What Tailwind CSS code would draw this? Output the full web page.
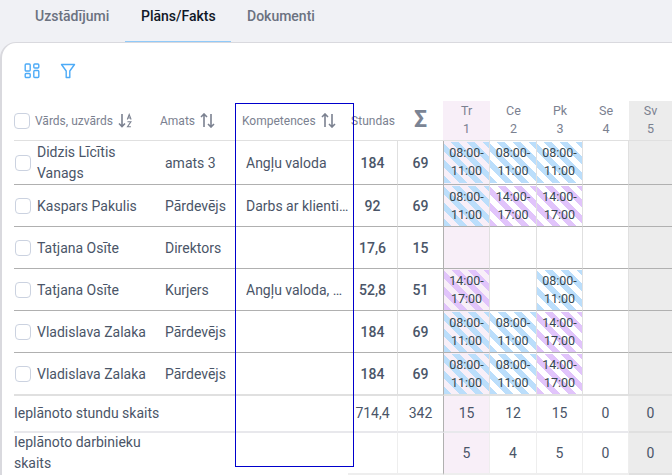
<!DOCTYPE html>
<html lang="lv">
<head>
    <meta charset="UTF-8">
    <title>Plāns/Fakts</title>
    <script src="https://cdn.jsdelivr.net/npm/@tailwindcss/browser@4"></script>
</head>
<body class="relative h-[475px] w-[672px] overflow-hidden bg-[#f0f1f5] font-['Roboto',sans-serif] text-[14px] text-[#4a5568]">
    <!-- Tabs -->
    <div class="flex h-[42px] pl-[10px] text-[14px] font-medium leading-[32px] text-[#6b7280]">
        <div class="w-[115px] pl-[25px]">Uzstādījumi</div>
        <div class="h-[42px] w-[106px] border-b border-[#90caf9] pl-[16px] text-[#111827]">Plāns/Fakts</div>
        <div class="pl-[16px]">Dokumenti</div>
    </div>

    <!-- Card -->
    <div class="h-[433px] rounded-tl-[16px] border-t border-l-2 border-[#d9d9de] bg-white pl-[12px]">
        <div class="flex h-[58px] items-start gap-[20px] pt-[20px] pl-[10px]">
            <svg width="16" height="16" viewBox="0 0 16 16" fill="none" stroke="#4dabf7" stroke-width="1.4">
                <rect x="1.2" y="1" width="5" height="7" rx="1"/><rect x="9.8" y="1" width="5" height="4" rx="1"/>
                <rect x="1.2" y="10.5" width="5" height="4" rx="1"/><rect x="9.8" y="7.5" width="5" height="7" rx="1"/>
            </svg>
            <svg width="16" height="16" viewBox="0 0 16 16" fill="none" stroke="#4dabf7" stroke-width="1.4" stroke-linejoin="round">
                <path d="M1.5 1.5h13L9.8 8v6.5H6.2V8z"/>
            </svg>
        </div>

        <div class="grid grid-cols-[146px_76px_112px_50px_46px_46px_47px_46px_46px_43px] grid-rows-[40px_44px_42px_42px_42px_42px_43px_37px_42px]">
            <!-- Header -->
            <div class="flex items-center border-b border-[#e0e0e0] text-[12px] text-[#7b8190]">
                <span class="mr-[5px] h-[16px] w-[16px] rounded-[4px] border border-[#cbd2e0] bg-white"></span>Vārds, uzvārds
                <svg class="ml-[5px]" width="15" height="15" viewBox="0 0 15 15" fill="none" stroke="#7b8190" stroke-width="1.6"><path d="M4 1v12.5M1 10.5l3 3 3-3"/><path d="M9.3 6.5l1.9-5 1.9 5M10 5h2.4M9.5 8.8h3.4l-3.4 5h3.4" stroke-width="1.1"/></svg>
            </div>
            <div class="flex items-center border-b border-[#e0e0e0] text-[12px] text-[#7b8190]">Amats
                <svg class="ml-[5px]" width="15" height="15" viewBox="0 0 15 15" fill="none" stroke="#7b8190" stroke-width="1.6"><path d="M4 14V1M1 4l3-3 3 3M11 1v13M8 11l3 3 3-3"/></svg>
            </div>
            <div class="flex items-center border-b border-[#e0e0e0] pl-[6px] text-[12px] text-[#7b8190]">Kompetences
                <svg class="ml-[5px]" width="15" height="15" viewBox="0 0 15 15" fill="none" stroke="#7b8190" stroke-width="1.6"><path d="M4 14V1M1 4l3-3 3 3M11 1v13M8 11l3 3 3-3"/></svg>
            </div>
            <div class="flex items-center justify-center border-b border-[#e0e0e0] text-[12px] text-[#7b8190]">Stundas</div>
            <div class="flex items-center justify-center border-b border-[#e0e0e0] pr-[1px] text-[23px] font-bold text-[#7b8494]">Σ</div>
            <div class="-ml-[1px] border-b border-[#e0e0e0] bg-[#f8eff8] pt-[1px] text-center text-[12.5px] leading-[18px] text-[#7b8190]">Tr<br>1</div>
            <div class="border-b border-[#e0e0e0] pt-[1px] text-center text-[12.5px] leading-[18px] text-[#7b8190]">Ce<br>2</div>
            <div class="border-b border-[#e0e0e0] pt-[1px] text-center text-[12.5px] leading-[18px] text-[#7b8190]">Pk<br>3</div>
            <div class="border-b border-[#e0e0e0] pt-[1px] text-center text-[12.5px] leading-[18px] text-[#7b8190]">Se<br>4</div>
            <div class="border-b border-[#e0e0e0] bg-[#ececec] pt-[1px] text-center text-[12.5px] leading-[18px] text-[#7b8190]">Sv<br>5</div>

            <!-- Didzis -->
            <div class="flex items-center border-b border-[#b0b0b0] pt-[1px] leading-[21px]"><span class="mr-[6px] ml-[1px] h-[16px] w-[16px] shrink-0 rounded-[4px] border border-[#cbd2e0]"></span><span class="w-[100px]">Didzis Līcītis Vanags</span></div>
            <div class="flex items-center border-b border-[#b0b0b0] pt-[1px] pl-[5px]">amats 3</div>
            <div class="flex items-center border-b border-[#b0b0b0] pt-[1px] pl-[10px]">Angļu valoda</div>
            <div class="flex items-center justify-center border-r border-b border-[#e0e0e0] border-b-[#b0b0b0] pt-[1px] font-medium">184</div>
            <div class="flex items-center justify-center border-r border-b border-[#b0b0b0] pt-[1px] font-medium">69</div>
            <div class="border-r border-b border-[#e0e0e0] border-b-[#b0b0b0] bg-[#f8eff8] text-center text-[12.5px] leading-[18px] text-[#37474f]"><div class="mt-[1px] h-[41px] bg-[repeating-linear-gradient(45deg,#bbdefb_0,#bbdefb_5.65px,transparent_5.65px,transparent_11.3px)] pt-[2px]">08:00-<br>11:00</div></div>
            <div class="border-r border-b border-[#e0e0e0] border-b-[#b0b0b0] text-center text-[12.5px] leading-[18px] text-[#37474f]"><div class="mt-[1px] h-[41px] bg-[repeating-linear-gradient(45deg,#bbdefb_0,#bbdefb_5.65px,transparent_5.65px,transparent_11.3px)] pt-[2px]">08:00-<br>11:00</div></div>
            <div class="border-r border-b border-[#e0e0e0] border-b-[#b0b0b0] text-center text-[12.5px] leading-[18px] text-[#37474f]"><div class="mt-[1px] h-[41px] bg-[repeating-linear-gradient(45deg,#bbdefb_0,#bbdefb_5.65px,transparent_5.65px,transparent_11.3px)] pt-[2px]">08:00-<br>11:00</div></div>
            <div class="border-r border-b border-[#e0e0e0] border-b-[#b0b0b0]"></div>
            <div class="border-b border-[#b0b0b0] bg-[#ececec]"></div>

            <!-- Kaspars -->
            <div class="flex items-center border-b border-[#b0b0b0] pt-[1px]"><span class="mr-[6px] ml-[1px] h-[16px] w-[16px] shrink-0 rounded-[4px] border border-[#cbd2e0]"></span>Kaspars Pakulis</div>
            <div class="flex items-center border-b border-[#b0b0b0] pt-[1px] pl-[5px]">Pārdevējs</div>
            <div class="flex items-center border-b border-[#b0b0b0] pt-[1px] pl-[10px]"><span class="w-[105px] shrink-0 truncate">Darbs ar klientiem</span></div>
            <div class="flex items-center justify-center border-r border-b border-[#e0e0e0] border-b-[#b0b0b0] pt-[1px] font-medium">92</div>
            <div class="flex items-center justify-center border-r border-b border-[#b0b0b0] pt-[1px] font-medium">69</div>
            <div class="border-r border-b border-[#e0e0e0] border-b-[#b0b0b0] bg-[#f8eff8] text-center text-[12.5px] leading-[18px] text-[#37474f]"><div class="mt-[1px] h-[40px] bg-[repeating-linear-gradient(45deg,#bbdefb_0,#bbdefb_5.65px,transparent_5.65px,transparent_11.3px)] pt-[2px]">08:00-<br>11:00</div></div>
            <div class="border-r border-b border-[#e0e0e0] border-b-[#b0b0b0] text-center text-[12.5px] leading-[18px] text-[#37474f]"><div class="mt-[1px] h-[40px] bg-[repeating-linear-gradient(45deg,#e1c4fb_0,#e1c4fb_5.65px,transparent_5.65px,transparent_11.3px)] pt-[2px]">14:00-<br>17:00</div></div>
            <div class="border-r border-b border-[#e0e0e0] border-b-[#b0b0b0] text-center text-[12.5px] leading-[18px] text-[#37474f]"><div class="mt-[1px] h-[40px] bg-[repeating-linear-gradient(45deg,#e1c4fb_0,#e1c4fb_5.65px,transparent_5.65px,transparent_11.3px)] pt-[2px]">14:00-<br>17:00</div></div>
            <div class="border-r border-b border-[#e0e0e0] border-b-[#b0b0b0]"></div>
            <div class="border-b border-[#b0b0b0] bg-[#ececec]"></div>

            <!-- Tatjana, Direktors -->
            <div class="flex items-center border-b border-[#b0b0b0] pt-[1px]"><span class="mr-[6px] ml-[1px] h-[16px] w-[16px] shrink-0 rounded-[4px] border border-[#cbd2e0]"></span>Tatjana Osīte</div>
            <div class="flex items-center border-b border-[#b0b0b0] pt-[1px] pl-[5px]">Direktors</div>
            <div class="border-b border-[#b0b0b0]"></div>
            <div class="flex items-center justify-center border-r border-b border-[#e0e0e0] border-b-[#b0b0b0] pt-[1px] font-medium">17,6</div>
            <div class="flex items-center justify-center border-r border-b border-[#b0b0b0] pt-[1px] font-medium">15</div>
            <div class="border-r border-b border-[#e0e0e0] border-b-[#b0b0b0] bg-[#f8eff8]"></div>
            <div class="border-r border-b border-[#e0e0e0] border-b-[#b0b0b0]"></div>
            <div class="border-r border-b border-[#e0e0e0] border-b-[#b0b0b0]"></div>
            <div class="border-r border-b border-[#e0e0e0] border-b-[#b0b0b0]"></div>
            <div class="border-b border-[#b0b0b0] bg-[#ececec]"></div>

            <!-- Tatjana, Kurjers -->
            <div class="flex items-center border-b border-[#b0b0b0] pt-[1px]"><span class="mr-[6px] ml-[1px] h-[16px] w-[16px] shrink-0 rounded-[4px] border border-[#cbd2e0]"></span>Tatjana Osīte</div>
            <div class="flex items-center border-b border-[#b0b0b0] pt-[1px] pl-[5px]">Kurjers</div>
            <div class="flex items-center border-b border-[#b0b0b0] pt-[1px] pl-[10px]"><span class="w-[105px] shrink-0 truncate">Angļu valoda, Darbs</span></div>
            <div class="flex items-center justify-center border-r border-b border-[#e0e0e0] border-b-[#b0b0b0] pt-[1px] font-medium">52,8</div>
            <div class="flex items-center justify-center border-r border-b border-[#b0b0b0] pt-[1px] font-medium">51</div>
            <div class="border-r border-b border-[#e0e0e0] border-b-[#b0b0b0] bg-[#f8eff8] text-center text-[12.5px] leading-[18px] text-[#37474f]"><div class="mt-[1px] h-[40px] bg-[repeating-linear-gradient(45deg,#e1c4fb_0,#e1c4fb_5.65px,transparent_5.65px,transparent_11.3px)] pt-[2px]">14:00-<br>17:00</div></div>
            <div class="border-r border-b border-[#e0e0e0] border-b-[#b0b0b0]"></div>
            <div class="border-r border-b border-[#e0e0e0] border-b-[#b0b0b0] text-center text-[12.5px] leading-[18px] text-[#37474f]"><div class="mt-[1px] h-[40px] bg-[repeating-linear-gradient(45deg,#bbdefb_0,#bbdefb_5.65px,transparent_5.65px,transparent_11.3px)] pt-[2px]">08:00-<br>11:00</div></div>
            <div class="border-r border-b border-[#e0e0e0] border-b-[#b0b0b0]"></div>
            <div class="border-b border-[#b0b0b0] bg-[#ececec]"></div>

            <!-- Vladislava 1 -->
            <div class="flex items-center border-b border-[#b0b0b0] pt-[1px]"><span class="mr-[6px] ml-[1px] h-[16px] w-[16px] shrink-0 rounded-[4px] border border-[#cbd2e0]"></span>Vladislava Zalaka</div>
            <div class="flex items-center border-b border-[#b0b0b0] pt-[1px] pl-[5px]">Pārdevējs</div>
            <div class="border-b border-[#b0b0b0]"></div>
            <div class="flex items-center justify-center border-r border-b border-[#e0e0e0] border-b-[#b0b0b0] pt-[1px] font-medium">184</div>
            <div class="flex items-center justify-center border-r border-b border-[#b0b0b0] pt-[1px] font-medium">69</div>
            <div class="border-r border-b border-[#e0e0e0] border-b-[#b0b0b0] bg-[#f8eff8] text-center text-[12.5px] leading-[18px] text-[#37474f]"><div class="mt-[1px] h-[40px] bg-[repeating-linear-gradient(45deg,#bbdefb_0,#bbdefb_5.65px,transparent_5.65px,transparent_11.3px)] pt-[2px]">08:00-<br>11:00</div></div>
            <div class="border-r border-b border-[#e0e0e0] border-b-[#b0b0b0] text-center text-[12.5px] leading-[18px] text-[#37474f]"><div class="mt-[1px] h-[40px] bg-[repeating-linear-gradient(45deg,#bbdefb_0,#bbdefb_5.65px,transparent_5.65px,transparent_11.3px)] pt-[2px]">08:00-<br>11:00</div></div>
            <div class="border-r border-b border-[#e0e0e0] border-b-[#b0b0b0] text-center text-[12.5px] leading-[18px] text-[#37474f]"><div class="mt-[1px] h-[40px] bg-[repeating-linear-gradient(45deg,#e1c4fb_0,#e1c4fb_5.65px,transparent_5.65px,transparent_11.3px)] pt-[2px]">14:00-<br>17:00</div></div>
            <div class="border-r border-b border-[#e0e0e0] border-b-[#b0b0b0]"></div>
            <div class="border-b border-[#b0b0b0] bg-[#ececec]"></div>

            <!-- Vladislava 2 -->
            <div class="flex items-center border-b-2 border-[#e0e0e0] pt-[1px]"><span class="mr-[6px] ml-[1px] h-[16px] w-[16px] shrink-0 rounded-[4px] border border-[#cbd2e0]"></span>Vladislava Zalaka</div>
            <div class="flex items-center border-b-2 border-[#e0e0e0] pt-[1px] pl-[5px]">Pārdevējs</div>
            <div class="border-b-2 border-[#e0e0e0]"></div>
            <div class="flex items-center justify-center border-r border-b-2 border-[#e0e0e0] pt-[1px] font-medium">184</div>
            <div class="flex items-center justify-center border-r border-b-2 border-[#e0e0e0] border-r-[#b0b0b0] pt-[1px] font-medium">69</div>
            <div class="border-r border-b-2 border-[#e0e0e0] bg-[#f8eff8] text-center text-[12.5px] leading-[18px] text-[#37474f]"><div class="mt-[1px] h-[40px] bg-[repeating-linear-gradient(45deg,#bbdefb_0,#bbdefb_5.65px,transparent_5.65px,transparent_11.3px)] pt-[2px]">08:00-<br>11:00</div></div>
            <div class="border-r border-b-2 border-[#e0e0e0] text-center text-[12.5px] leading-[18px] text-[#37474f]"><div class="mt-[1px] h-[40px] bg-[repeating-linear-gradient(45deg,#bbdefb_0,#bbdefb_5.65px,transparent_5.65px,transparent_11.3px)] pt-[2px]">08:00-<br>11:00</div></div>
            <div class="border-r border-b-2 border-[#e0e0e0] text-center text-[12.5px] leading-[18px] text-[#37474f]"><div class="mt-[1px] h-[40px] bg-[repeating-linear-gradient(45deg,#e1c4fb_0,#e1c4fb_5.65px,transparent_5.65px,transparent_11.3px)] pt-[2px]">14:00-<br>17:00</div></div>
            <div class="border-r border-b-2 border-[#e0e0e0]"></div>
            <div class="border-b-2 border-[#e0e0e0] bg-[#ececec]"></div>

            <!-- Totals -->
            <div class="col-span-3 flex items-center border-b-2 border-[#e8e8ec]">Ieplānoto stundu skaits</div>
            <div class="flex items-center justify-center border-r border-b-2 border-[#eeeeee] border-b-[#e8e8ec]">714,4</div>
            <div class="flex items-center justify-center border-r border-b-2 border-[#e8e8ec] border-r-[#b0b0b0]">342</div>
            <div class="flex items-center justify-center border-r border-b-2 border-[#eeeeee] border-b-[#e8e8ec] bg-[#f8eff8]">15</div>
            <div class="flex items-center justify-center border-r border-b-2 border-[#eeeeee] border-b-[#e8e8ec]">12</div>
            <div class="flex items-center justify-center border-r border-b-2 border-[#eeeeee] border-b-[#e8e8ec]">15</div>
            <div class="flex items-center justify-center border-r border-b-2 border-[#eeeeee] border-b-[#e8e8ec]">0</div>
            <div class="flex items-center justify-center border-b-2 border-[#e0e0e0] bg-[#ececec]">0</div>

            <div class="col-span-3 -mt-[1px] leading-[21px]"><div class="w-[146px]">Ieplānoto darbinieku skaits</div></div>
            <div class="border-r border-b-2 border-[#eeeeee]"></div>
            <div class="border-r border-b-2 border-[#eeeeee] border-r-[#b0b0b0]"></div>
            <div class="flex items-center justify-center border-r border-b-2 border-[#eeeeee] bg-[#f8eff8]">5</div>
            <div class="flex items-center justify-center border-r border-b-2 border-[#eeeeee]">4</div>
            <div class="flex items-center justify-center border-r border-b-2 border-[#eeeeee]">5</div>
            <div class="flex items-center justify-center border-r border-b-2 border-[#eeeeee]">0</div>
            <div class="flex items-center justify-center border-b-2 border-[#e0e0e0] bg-[#ececec]">0</div>
        </div>
    </div>

    <!-- Annotation frame lying over the table -->
    <div class="absolute top-[103px] left-[235px] h-[364px] w-[119px] border border-[#0000cc]"></div>
</body>
</html>
